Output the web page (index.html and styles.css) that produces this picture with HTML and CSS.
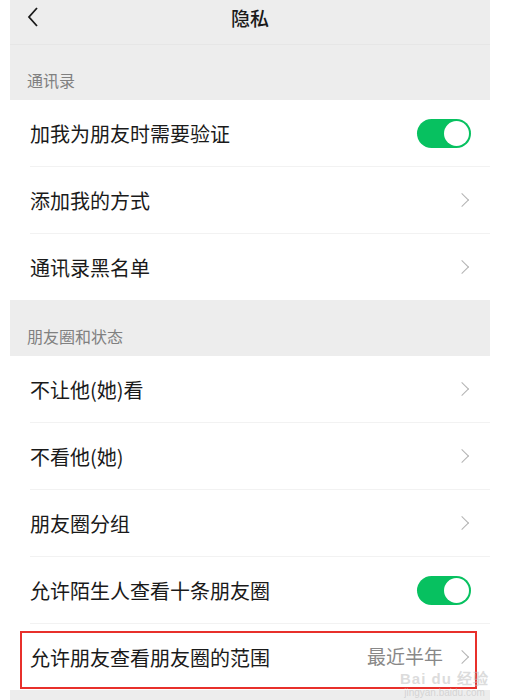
FILE: index.html
```html
<!DOCTYPE html>
<html lang="zh-CN">
<head>
    <meta charset="UTF-8">
    <meta name="viewport" content="width=device-width, initial-scale=1.0">
    <title>隐私</title>
    <link rel="stylesheet" href="styles.css">
</head>
<body>
    <div class="page">
        <div class="topbar">
            <svg class="back" width="12" height="20" viewBox="0 0 12 20">
                <path d="M10 1 L2 10 L10 19" fill="none" stroke="#1a1a1a" stroke-width="1.8"/>
            </svg>
            <div class="title">隐私</div>
        </div>

        <div class="section-title first">通讯录</div>
        <div class="list">
            <div class="row">
                <span class="label">加我为朋友时需要验证</span>
                <span class="switch"></span>
            </div>
            <div class="row">
                <span class="label">添加我的方式</span>
                <span class="arrow"></span>
            </div>
            <div class="row">
                <span class="label">通讯录黑名单</span>
                <span class="arrow"></span>
            </div>
        </div>

        <div class="section-title">朋友圈和状态</div>
        <div class="list">
            <div class="row">
                <span class="label">不让他(她)看</span>
                <span class="arrow"></span>
            </div>
            <div class="row">
                <span class="label">不看他(她)</span>
                <span class="arrow"></span>
            </div>
            <div class="row">
                <span class="label">朋友圈分组</span>
                <span class="arrow"></span>
            </div>
            <div class="row">
                <span class="label">允许陌生人查看十条朋友圈</span>
                <span class="switch"></span>
            </div>
            <div class="row marked">
                <span class="label">允许朋友查看朋友圈的范围</span>
                <span class="value">最近半年</span>
                <span class="arrow"></span>
                <div class="highlight"></div>
            </div>
        </div>
        <div class="footer"></div>
    </div>
    <div class="watermark">
        <div class="wm-logo">Bai du 经验</div>
        <div class="wm-url">jingyan.baidu.com</div>
    </div>
</body>
</html>
```

FILE: styles.css
```css
body {
    margin: 0;
    background-color: #fff;
    font-family: "Noto Sans CJK SC", "Noto Sans", sans-serif;
    position: relative;
    height: 700px;
    overflow: hidden;
}
.page {
    width: 480px;
    margin-left: 10px;
    background-color: #ededed;
}
.topbar {
    height: 45px;
    border-bottom: 1px solid #e6e6e6;
    box-sizing: border-box;
    position: relative;
    display: flex;
    align-items: center;
    justify-content: center;
}
.back {
    position: absolute;
    left: 17px;
    top: 7px;
}
.title {
    font-size: 19px;
    font-weight: 500;
    color: #1a1a1a;
    margin-top: -10px;
}
.section-title {
    height: 56px;
    box-sizing: border-box;
    padding: 0 0 8px 17px;
    display: flex;
    align-items: flex-end;
    font-size: 16px;
    color: #808080;
}
.section-title.first {
    height: 55px;
}
.list {
    background-color: #fff;
}
.row {
    height: 66px;
    margin-left: 20px;
    padding-right: 18px;
    display: flex;
    align-items: center;
    border-bottom: 1px solid #f2f2f2;
    position: relative;
}
.row:last-child {
    border-bottom: none;
}
.label {
    flex: 1;
    font-size: 20px;
    color: #1a1a1a;
}
.value {
    font-size: 19px;
    line-height: 1;
    color: #888;
    margin-right: 14px;
    margin-bottom: 4px;
}
.arrow {
    width: 9px;
    height: 9px;
    border-top: 1.6px solid #b3b3b3;
    border-right: 1.6px solid #b3b3b3;
    transform: rotate(45deg);
    margin-right: 5px;
}
.switch {
    width: 54px;
    height: 29px;
    border-radius: 15px;
    background-color: #07c160;
    position: relative;
    margin-right: 1px;
}
.switch::after {
    content: "";
    position: absolute;
    right: 2px;
    top: 2px;
    width: 25px;
    height: 25px;
    border-radius: 50%;
    background-color: #fff;
}
.highlight {
    position: absolute;
    left: -10px;
    right: 13px;
    top: 7px;
    bottom: 1px;
    border: 2px solid #e8302b;
}
.footer {
    height: 10px;
}
.watermark {
    position: absolute;
    left: 400px;
    top: 672px;
    color: rgba(190, 190, 190, 0.55);
    font-family: "Liberation Sans", sans-serif;
    text-align: center;
}
.wm-logo {
    font-size: 15px;
    line-height: 14px;
    font-weight: bold;
    letter-spacing: 1px;
}
.wm-url {
    font-size: 10px;
    line-height: 11px;
    margin-top: 1px;
}
```
